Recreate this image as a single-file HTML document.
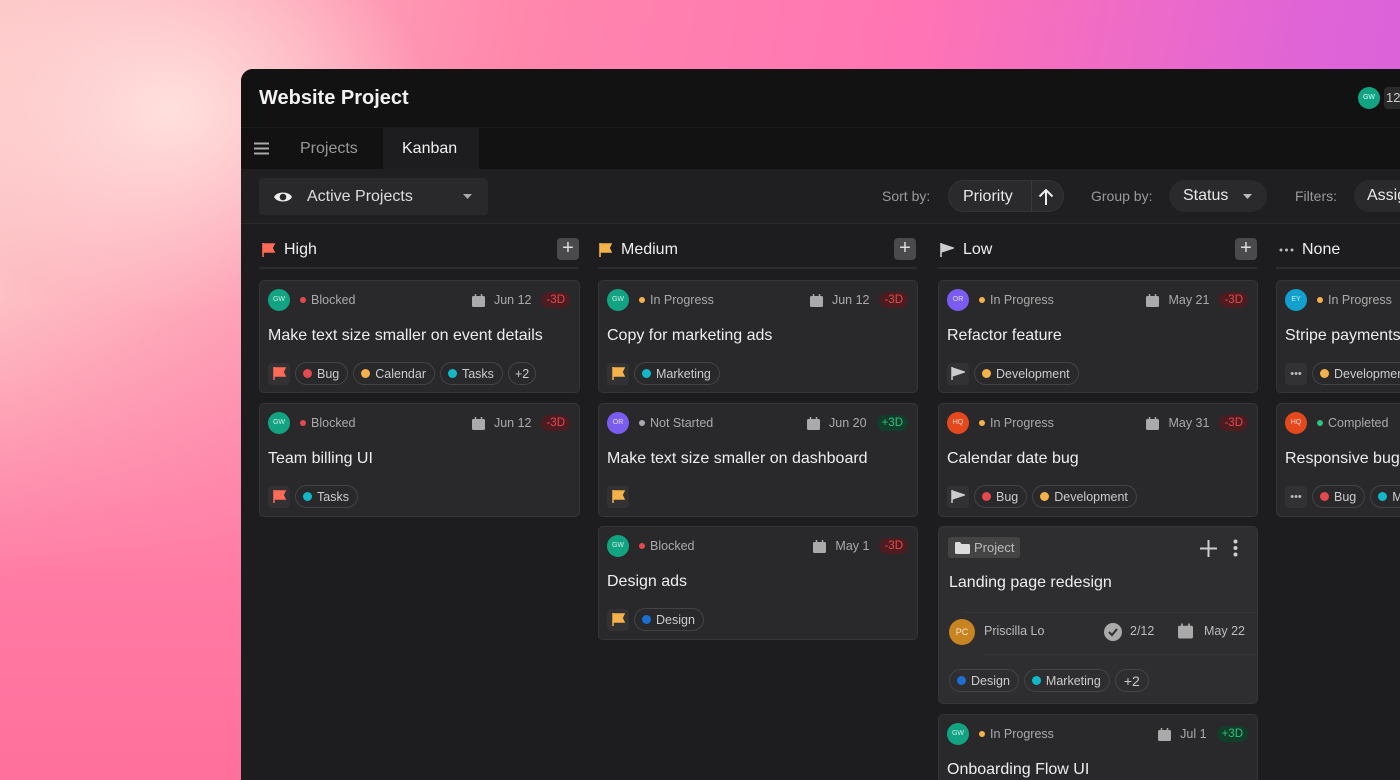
<!DOCTYPE html>
<html style="overflow:hidden;width:1400px;height:780px"><head><meta charset="utf-8"><style>
*{box-sizing:border-box;margin:0;padding:0}
body{width:1400px;height:780px;overflow:hidden;font-family:"Liberation Sans",sans-serif;position:relative;
background:radial-gradient(ellipse 260px 200px at 170px 110px,#ffe0dc 0%,rgba(255,210,210,0) 100%),linear-gradient(100deg,#fdc6c6 0%,#ff86ac 35%,#ff74b4 60%,#e064d6 85%,#d660e0 100%);}
.bl{position:absolute;left:0;top:300px;width:260px;height:480px;background:linear-gradient(180deg,rgba(255,120,160,0) 0%,#ff7aa4 60%,#ff709c 100%)}
.win{position:absolute;left:241px;top:69px;width:1159px;height:711px;background:#1d1d1f;border-radius:12px 0 0 0;overflow:hidden;color:#ddd}
.hdr{position:absolute;left:0;top:0;right:0;height:58px;background:#121213}
.hdr h1{position:absolute;left:18px;top:18px;font-size:20px;font-weight:700;color:#f2f2f2}
.tabs{position:absolute;left:0;top:58px;right:0;height:42px;background:#121213;border-top:1px solid #1c1c1c}
.tab{position:absolute;top:0;height:42px;line-height:42px;font-size:16px}
.tb{position:absolute;left:0;top:100px;right:0;height:55px;background:#1f1f21;border-bottom:1px solid #2a2a2a}
.pill{position:absolute;height:32px;border-radius:16px;background:#2a2a2c;font-size:16px;color:#e8e8e8;line-height:32px}
.lbl{position:absolute;font-size:14px;color:#9a9a9a;top:19px}
.ch{position:absolute;top:168px;height:32px;font-size:16px;color:#eee;font-weight:500}
.ch .u{position:absolute;left:0;right:0;top:30px;height:2px;background:#2c2c2e}
.plus{position:absolute;top:169px;width:22px;height:22px;border-radius:4px;background:#4a4a4c;color:#ddd;font-size:20px;line-height:21px;text-align:center}
.card{position:absolute;background:#29292b;border:1px solid #353537;border-radius:5px;overflow:hidden}
.top{position:absolute;left:8px;right:9px;top:8px;height:22px;display:flex;align-items:center;font-size:12.5px;color:#aaa}
.av{width:22px;height:22px;border-radius:50%;font-size:7px;color:rgba(255,255,255,.8);text-align:center;line-height:22px;margin-right:10px;flex:none}
.dot{width:6px;height:6px;border-radius:50%;display:inline-block;margin-right:5px;flex:none}
.sp{flex:1}
.cal{width:13px;height:13px;margin-right:9px}
.bd{font-size:11.5px;padding:2px 5px;border-radius:8px;margin-left:10px}
.r{background:#4c1c20;color:#e5484d}.g{background:#123d2b;color:#2fc27e}
.title{position:absolute;left:8px;top:46px;font-size:16px;color:#eee;white-space:nowrap}
.tags{position:absolute;left:8px;top:81px;height:23px;display:flex;align-items:center;gap:5px;white-space:nowrap}
.fl{width:22px;height:22px;border-radius:4px;background:#323234;display:flex;align-items:center;justify-content:center;flex:none}
.tg{height:23px;border:1px solid #444;border-radius:12px;padding:0 8px 0 7px;font-size:12.5px;color:#ccc;display:flex;align-items:center;flex:none}
.tg .dot{width:9px;height:9px}
</style></head><body>
<div class="bl"></div>
<div class="win">
 <div class="hdr"><h1>Website Project</h1>
  <div style="position:absolute;left:1117px;top:18px;width:22px;height:22px;border-radius:50%;background:#12a383;font-size:7px;color:#dff;text-align:center;line-height:22px">GW</div>
  <div style="position:absolute;left:1143px;top:18px;width:16px;height:22px;background:#2a2a2a;border-radius:4px 0 0 4px;font-size:13px;color:#ccc;line-height:22px;padding-left:2px;overflow:hidden;white-space:nowrap">12</div>
 </div>
 <div class="tabs">
  <svg style="position:absolute;left:13px;top:14px" width="15" height="13"><path d="M0 1.5h15M0 6.5h15M0 11.5h15" stroke="#aaa" stroke-width="2"/></svg>
  <div class="tab" style="left:59px;color:#999">Projects</div>
  <div class="tab" style="left:142px;width:96px;background:#1d1d1f;color:#f0f0f0;padding-left:19px">Kanban</div>
 </div>
 <div class="tb">
  <div style="position:absolute;left:18px;top:9px;width:229px;height:37px;background:#29292b;border-radius:4px;font-size:16px;color:#ddd;line-height:37px">
   <svg style="position:absolute;left:14px;top:11px" width="20" height="16" viewBox="0 0 20 16"><path d="M1 8C4 2 16 2 19 8C16 14 4 14 1 8Z" fill="#eee"/><circle cx="10" cy="8" r="3.3" fill="#29292b"/></svg>
   <span style="position:absolute;left:48px">Active Projects</span>
   <svg style="position:absolute;left:204px;top:16px" width="9" height="5"><path d="M0 0h9L4.5 5z" fill="#aaa"/></svg>
  </div>
  <div class="lbl" style="left:641px">Sort by:</div>
  <div class="pill" style="left:707px;top:11px;width:116px;border:1px solid #333"><span style="position:absolute;left:14px">Priority</span><div style="position:absolute;left:82px;top:0;width:1px;height:30px;background:#3a3a3a"></div>
   <svg style="position:absolute;left:89px;top:7px" width="16" height="18"><path d="M8 17V2M1.5 8.5L8 2l6.5 6.5" stroke="#eee" stroke-width="2" fill="none"/></svg></div>
  <div class="lbl" style="left:850px">Group by:</div>
  <div class="pill" style="left:928px;top:11px;width:98px"><span style="position:absolute;left:14px">Status</span><svg style="position:absolute;left:74px;top:14px" width="9" height="5"><path d="M0 0h9L4.5 5z" fill="#bbb"/></svg></div>
  <div class="lbl" style="left:1054px">Filters:</div>
  <div class="pill" style="left:1113px;top:11px;width:46px;border-radius:16px 0 0 16px;overflow:hidden;white-space:nowrap"><span style="position:absolute;left:13px">Assignee</span></div>
 </div>

 <div class="ch" style="left:18px;width:320px"><svg style="position:absolute;left:3px;top:6px" width="13" height="14"><path d="M1 0v14M1 1h11l-2 4 2 4H1" fill="#ff6b57" stroke="#ff6b57" stroke-width="1.6"/></svg><span style="position:absolute;left:25px;top:4px">High</span><div class="u"></div></div>
 <div class="plus" style="left:316px">+</div>
 <div class="ch" style="left:357px;width:319px"><svg style="position:absolute;left:1px;top:6px" width="13" height="14"><path d="M1 0v14M1 1h11l-2 4 2 4H1" fill="#f5b14a" stroke="#f5b14a" stroke-width="1.6"/></svg><span style="position:absolute;left:23px;top:4px">Medium</span><div class="u"></div></div>
 <div class="plus" style="left:653px">+</div>
 <div class="ch" style="left:697px;width:319px"><svg style="position:absolute;left:2px;top:6px" width="14" height="14"><path d="M1 0v14M1 1l12 4-12 4" fill="#ccc" stroke="#ccc" stroke-width="1.6"/></svg><span style="position:absolute;left:25px;top:4px">Low</span><div class="u"></div></div>
 <div class="plus" style="left:994px">+</div>
 <div class="ch" style="left:1035px;width:124px"><svg style="position:absolute;left:3px;top:11px" width="15" height="4"><circle cx="2" cy="2" r="1.5" fill="#bbb"/><circle cx="7.5" cy="2" r="1.5" fill="#bbb"/><circle cx="13" cy="2" r="1.5" fill="#bbb"/></svg><span style="position:absolute;left:26px;top:4px">None</span><div class="u"></div></div>

 <div class="card" style="left:18px;top:211px;width:321px;height:113px">
  <div class="top"><div class="av" style="background:#12a383">GW</div><span class="dot" style="background:#e5484d"></span>Blocked<div class="sp"></div><svg class="cal" viewBox="0 0 13 13"><rect x="0" y="2" width="13" height="11" rx="1.5" fill="#aaa"/><path d="M3.5 0v3M9.5 0v3" stroke="#aaa" stroke-width="1.5"/></svg>Jun 12<span class="bd r">-3D</span></div>
  <div class="title">Make text size smaller on event details</div>
  <div class="tags"><div class="fl"><svg width="13" height="13"><path d="M1 0v13M1 1h11l-2 4 2 4H1" fill="#ff6b57" stroke="#ff6b57" stroke-width="1.5"/></svg></div>
   <div class="tg"><span class="dot" style="background:#e5484d"></span>Bug</div><div class="tg"><span class="dot" style="background:#f5b14a"></span>Calendar</div><div class="tg"><span class="dot" style="background:#12b8c8"></span>Tasks</div><div class="tg" style="padding:0 6px">+2</div></div>
 </div>
 <div class="card" style="left:18px;top:334px;width:321px;height:114px">
  <div class="top"><div class="av" style="background:#12a383">GW</div><span class="dot" style="background:#e5484d"></span>Blocked<div class="sp"></div><svg class="cal" viewBox="0 0 13 13"><rect x="0" y="2" width="13" height="11" rx="1.5" fill="#aaa"/><path d="M3.5 0v3M9.5 0v3" stroke="#aaa" stroke-width="1.5"/></svg>Jun 12<span class="bd r">-3D</span></div>
  <div class="title">Team billing UI</div>
  <div class="tags"><div class="fl"><svg width="13" height="13"><path d="M1 0v13M1 1h11l-2 4 2 4H1" fill="#ff6b57" stroke="#ff6b57" stroke-width="1.5"/></svg></div>
   <div class="tg"><span class="dot" style="background:#12b8c8"></span>Tasks</div></div>
 </div>

 <div class="card" style="left:357px;top:211px;width:320px;height:113px">
  <div class="top"><div class="av" style="background:#12a383">GW</div><span class="dot" style="background:#f5b14a"></span>In Progress<div class="sp"></div><svg class="cal" viewBox="0 0 13 13"><rect x="0" y="2" width="13" height="11" rx="1.5" fill="#aaa"/><path d="M3.5 0v3M9.5 0v3" stroke="#aaa" stroke-width="1.5"/></svg>Jun 12<span class="bd r">-3D</span></div>
  <div class="title">Copy for marketing ads</div>
  <div class="tags"><div class="fl"><svg width="13" height="13"><path d="M1 0v13M1 1h11l-2 4 2 4H1" fill="#f5b14a" stroke="#f5b14a" stroke-width="1.5"/></svg></div>
   <div class="tg"><span class="dot" style="background:#12b8c8"></span>Marketing</div></div>
 </div>
 <div class="card" style="left:357px;top:334px;width:320px;height:114px">
  <div class="top"><div class="av" style="background:#7b5cf0">OR</div><span class="dot" style="background:#aaa"></span>Not Started<div class="sp"></div><svg class="cal" viewBox="0 0 13 13"><rect x="0" y="2" width="13" height="11" rx="1.5" fill="#aaa"/><path d="M3.5 0v3M9.5 0v3" stroke="#aaa" stroke-width="1.5"/></svg>Jun 20<span class="bd g">+3D</span></div>
  <div class="title">Make text size smaller on dashboard</div>
  <div class="tags"><div class="fl"><svg width="13" height="13"><path d="M1 0v13M1 1h11l-2 4 2 4H1" fill="#f5b14a" stroke="#f5b14a" stroke-width="1.5"/></svg></div></div>
 </div>
 <div class="card" style="left:357px;top:457px;width:320px;height:114px">
  <div class="top"><div class="av" style="background:#12a383">GW</div><span class="dot" style="background:#e5484d"></span>Blocked<div class="sp"></div><svg class="cal" viewBox="0 0 13 13"><rect x="0" y="2" width="13" height="11" rx="1.5" fill="#aaa"/><path d="M3.5 0v3M9.5 0v3" stroke="#aaa" stroke-width="1.5"/></svg>May 1<span class="bd r">-3D</span></div>
  <div class="title">Design ads</div>
  <div class="tags"><div class="fl"><svg width="13" height="13"><path d="M1 0v13M1 1h11l-2 4 2 4H1" fill="#f5b14a" stroke="#f5b14a" stroke-width="1.5"/></svg></div>
   <div class="tg"><span class="dot" style="background:#1a6fd0"></span>Design</div></div>
 </div>

 <div class="card" style="left:697px;top:211px;width:320px;height:113px">
  <div class="top"><div class="av" style="background:#7b5cf0">OR</div><span class="dot" style="background:#f5b14a"></span>In Progress<div class="sp"></div><svg class="cal" viewBox="0 0 13 13"><rect x="0" y="2" width="13" height="11" rx="1.5" fill="#aaa"/><path d="M3.5 0v3M9.5 0v3" stroke="#aaa" stroke-width="1.5"/></svg>May 21<span class="bd r">-3D</span></div>
  <div class="title">Refactor feature</div>
  <div class="tags"><div class="fl"><svg width="14" height="13"><path d="M1 0v13M1 1l12 4-12 4" fill="#ccc" stroke="#ccc" stroke-width="1.5"/></svg></div>
   <div class="tg"><span class="dot" style="background:#f5b14a"></span>Development</div></div>
 </div>
 <div class="card" style="left:697px;top:334px;width:320px;height:114px">
  <div class="top"><div class="av" style="background:#e5481d">HQ</div><span class="dot" style="background:#f5b14a"></span>In Progress<div class="sp"></div><svg class="cal" viewBox="0 0 13 13"><rect x="0" y="2" width="13" height="11" rx="1.5" fill="#aaa"/><path d="M3.5 0v3M9.5 0v3" stroke="#aaa" stroke-width="1.5"/></svg>May 31<span class="bd r">-3D</span></div>
  <div class="title">Calendar date bug</div>
  <div class="tags"><div class="fl"><svg width="14" height="13"><path d="M1 0v13M1 1l12 4-12 4" fill="#ccc" stroke="#ccc" stroke-width="1.5"/></svg></div>
   <div class="tg"><span class="dot" style="background:#e5484d"></span>Bug</div><div class="tg"><span class="dot" style="background:#f5b14a"></span>Development</div></div>
 </div>
 <div class="card" style="left:697px;top:457px;width:320px;height:178px;background:#2e2e30">
  <div style="position:absolute;left:9px;top:10px;height:21px;background:#444;border-radius:3px;font-size:13px;color:#bbb;line-height:21px;padding:0 6px 0 26px">
   <svg style="position:absolute;left:7px;top:5px" width="15" height="12"><path d="M0 1.5Q0 0 1.5 0H5l1.5 2H13.5Q15 2 15 3.5V10.5Q15 12 13.5 12H1.5Q0 12 0 10.5Z" fill="#ddd"/></svg>Project</div>
  <svg style="position:absolute;left:261px;top:13px" width="17" height="17"><path d="M8.5 0v17M0 8.5h17" stroke="#ccc" stroke-width="2"/></svg>
  <svg style="position:absolute;left:294px;top:12px" width="5" height="18"><circle cx="2.5" cy="2.5" r="2" fill="#ccc"/><circle cx="2.5" cy="9" r="2" fill="#ccc"/><circle cx="2.5" cy="15.5" r="2" fill="#ccc"/></svg>
  <div class="title" style="left:10px;top:47px">Landing page redesign</div>
  <div style="position:absolute;left:25px;right:0;top:85px;height:1px;background:#363638"></div>
  <div class="av" style="position:absolute;left:10px;top:92px;width:26px;height:26px;line-height:26px;font-size:9px;background:#c78420">PC</div>
  <div style="position:absolute;left:45px;top:97px;font-size:12.5px;color:#bbb">Priscilla Lo</div>
  <svg style="position:absolute;left:165px;top:96px" width="18" height="18"><circle cx="9" cy="9" r="9" fill="#aaa"/><path d="M5 9l3 3 5-6" stroke="#2e2e30" stroke-width="2" fill="none"/></svg>
  <div style="position:absolute;left:191px;top:97px;font-size:12.5px;color:#bbb">2/12</div>
  <svg style="position:absolute;left:239px;top:96px" width="15" height="16" viewBox="0 0 13 13"><rect x="0" y="2" width="13" height="11" rx="1.5" fill="#aaa"/><path d="M3.5 0v3M9.5 0v3" stroke="#aaa" stroke-width="1.5"/></svg>
  <div style="position:absolute;left:265px;top:97px;font-size:12.5px;color:#bbb">May 22</div>
  <div style="position:absolute;left:45px;right:0;top:127px;height:1px;background:#363638"></div>
  <div class="tags" style="left:10px;top:142px"><div class="tg"><span class="dot" style="background:#1a6fd0"></span>Design</div><div class="tg"><span class="dot" style="background:#12b8c8"></span>Marketing</div><div class="tg" style="padding:0 8px;font-size:14px">+2</div></div>
 </div>
 <div class="card" style="left:697px;top:645px;width:320px;height:66px;border-bottom:none;border-radius:5px 5px 0 0">
  <div class="top"><div class="av" style="background:#12a383">GW</div><span class="dot" style="background:#f5b14a"></span>In Progress<div class="sp"></div><svg class="cal" viewBox="0 0 13 13"><rect x="0" y="2" width="13" height="11" rx="1.5" fill="#aaa"/><path d="M3.5 0v3M9.5 0v3" stroke="#aaa" stroke-width="1.5"/></svg>Jul 1<span class="bd g">+3D</span></div>
  <div class="title">Onboarding Flow UI</div>
 </div>

 <div class="card" style="left:1035px;top:211px;width:124px;height:113px;border-right:none;border-radius:5px 0 0 5px">
  <div class="top" style="right:0"><div class="av" style="background:#12a0cc">EY</div><span class="dot" style="background:#f5b14a"></span>In Progress</div>
  <div class="title">Stripe payments</div>
  <div class="tags"><div class="fl" style="color:#bbb;font-size:11px">•••</div><div class="tg"><span class="dot" style="background:#f5b14a"></span>Development</div></div>
 </div>
 <div class="card" style="left:1035px;top:334px;width:124px;height:114px;border-right:none;border-radius:5px 0 0 5px">
  <div class="top" style="right:0"><div class="av" style="background:#e5481d">HQ</div><span class="dot" style="background:#2fc27e"></span>Completed</div>
  <div class="title">Responsive bug</div>
  <div class="tags"><div class="fl" style="color:#bbb;font-size:11px">•••</div><div class="tg"><span class="dot" style="background:#e5484d"></span>Bug</div><div class="tg"><span class="dot" style="background:#12b8c8"></span>Marketing</div></div>
 </div>
</div>
</body></html>
